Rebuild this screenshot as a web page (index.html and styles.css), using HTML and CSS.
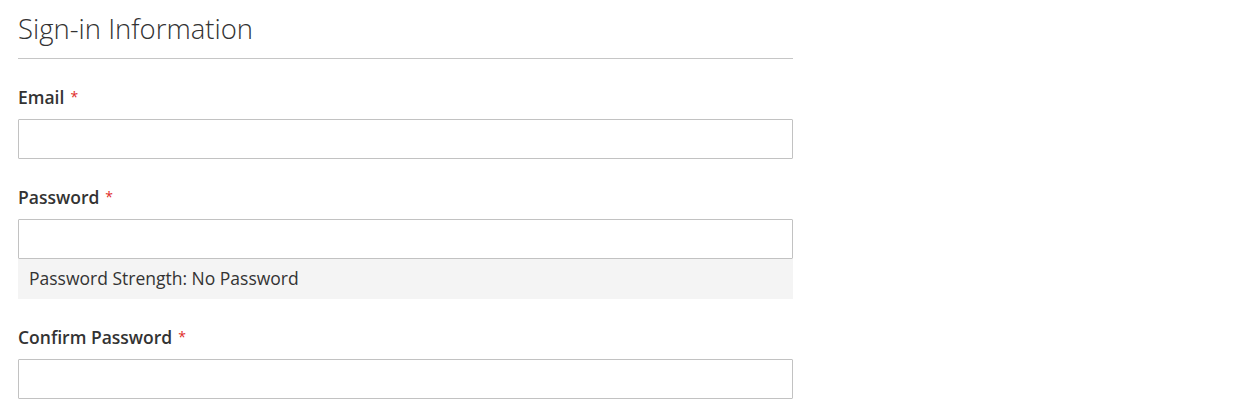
FILE: index.html
```html
<!DOCTYPE html>
<html lang="en">
<head>
<meta charset="utf-8">
<title>Sign-in Information</title>
<link rel="stylesheet" href="styles.css">
</head>
<body>
<form class="form">
  <fieldset class="fieldset">
    <legend class="legend">Sign-in Information</legend>
    <div class="field">
      <label class="label" for="email">Email</label>
      <input class="input" id="email" type="email">
    </div>
    <div class="field">
      <label class="label" for="password">Password</label>
      <input class="input" id="password" type="password">
      <div class="meter">Password Strength: No Password</div>
    </div>
    <div class="field">
      <label class="label" for="confirm">Confirm Password</label>
      <input class="input" id="confirm" type="password">
    </div>
  </fieldset>
</form>
</body>
</html>
```
FILE: styles.css
```css
html, body {
  margin: 0;
  padding: 0;
  background: #fff;
}
body {
  font-family: "Open Sans", "Liberation Sans", sans-serif;
  color: #333;
  font-size: 17.5px;
}
.form {
  padding: 0 18px;
  width: 775px;
}
.fieldset {
  border: 0;
  margin: 0;
  padding: 0;
  min-width: 0;
}
.legend {
  display: block;
  width: 100%;
  box-sizing: border-box;
  padding: 11px 0 11px;
  margin: 0 0 28px;
  font-size: 27.5px;
  font-weight: 300;
  line-height: 36px;
  border-bottom: 1px solid #c6c6c6;
  color: #333;
}
.field {
  display: flex;
  flex-direction: column;
  margin-bottom: 28px;
}
.label {
  font-weight: 600;
  font-size: 17.5px;
  line-height: 20px;
  margin-bottom: 12px;
}
.label::after {
  content: "*";
  color: #e02b27;
  font-size: 14px;
  font-weight: 400;
  margin-left: 6px;
  vertical-align: 2px;
}
.input {
  box-sizing: border-box;
  height: 40px;
  width: 100%;
  border: 1px solid #c2c2c2;
  border-radius: 1px;
  background: #fff;
  margin: 0;
  padding: 0 11px;
  font-family: inherit;
  font-size: 17.5px;
}
.meter {
  background: #f4f4f4;
  height: 40px;
  line-height: 39px;
  padding: 0 11px;
  font-size: 17.5px;
  color: #333;
}
```
